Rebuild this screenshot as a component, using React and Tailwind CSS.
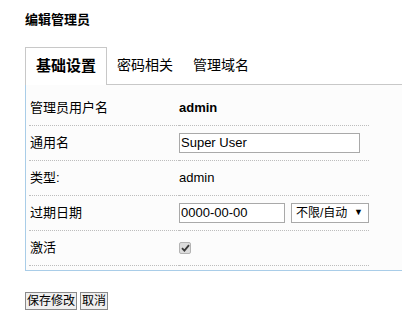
import React from 'react';

const rows = [
    { label: '管理员用户名', kind: 'bold', value: 'admin' },
    { label: '通用名', kind: 'input', value: 'Super User' },
    { label: '类型:', kind: 'text', value: 'admin' },
    { label: '过期日期', kind: 'date', value: '0000-00-00' },
    { label: '激活', kind: 'check' },
];

function Cell({ row }) {
    if (row.kind === 'bold') return <span className="font-bold">{row.value}</span>;
    if (row.kind === 'text') return <span>{row.value}</span>;
    if (row.kind === 'input') {
        return (
            <input
            defaultValue={row.value}
            className="w-[181px] h-[20px] border border-[#a9a9a9] bg-white px-[1px] text-[13px] outline-none"
            />
        );
    }
    if (row.kind === 'date') {
        return (
            <div className="flex items-center gap-[6px]">
                <input
                defaultValue={row.value}
                className="w-[106px] h-[20px] border border-[#a9a9a9] bg-white px-[1px] text-[13px] outline-none"
                />
                <div className="w-[78px] h-[20px] border border-[#a9a9a9] bg-white flex items-center justify-between pl-[4px] pr-[5px] text-[12px]">
                    <span>不限/自动</span>
                    <span className="text-[9px]">▼</span>
                </div>
            </div>
        );
    }
    // disabled checked checkbox
    return (
        <span className="w-[12px] h-[12px] rounded-[2px] border border-[#b4b4b4] bg-[#dcdcdc] flex items-center justify-center">
            <svg width="9" height="8" viewBox="0 0 9 8">
                <path d="M1 4.2 L3.4 6.6 L8 1.2" stroke="#3a3a3a" strokeWidth="1.8" fill="none" />
            </svg>
        </span>
    );
}

export default function App() {
    return (
    <div className="w-[402px] h-[311px] bg-white pl-[25px] text-[13px] text-black font-['Liberation_Sans','Noto_Sans_CJK_SC',sans-serif] overflow-hidden">
        <h2 className="h-[47px] pt-[12px] font-bold leading-[16px]">编辑管理员</h2>

        {/* tabs */}
        <div className="flex h-[38px]">
            <div className="w-[82px] border-t border-l border-r border-[#c8c8c8] bg-white flex items-center justify-center text-[15px] font-bold">
                基础设置
            </div>
            <div className="flex-1 flex items-center border-b border-[#c8c8c8] text-[14px]">
                <span className="px-[10px]">密码相关</span>
                <span className="px-[10px]">管理域名</span>
            </div>
        </div>

        {/* panel */}
        <div className="h-[186px] border-l border-b border-[#a9cde8] bg-[#fcfcfc] pl-[3px] pt-[5px]">
            <table className="w-[340px] border-collapse">
                <tbody>
                    {rows.map((row) => (
                    <tr key={row.label} className="h-[35px]">
                        <td className="w-[150px] pl-[1px] p-0 border-b border-dotted border-[#bdbdbd] align-middle">{row.label}</td>
                        <td className="p-0 border-b border-dotted border-[#bdbdbd] align-middle"><Cell row={row} /></td>
                    </tr>
                    ))}
                </tbody>
            </table>
        </div>

        <div className="mt-[21px] flex gap-[3px] text-[12px]">
            <button className="h-[18px] px-[1px] border border-[#8a8a8a] bg-[#efefef] leading-[16px]">保存修改</button>
            <button className="h-[18px] px-[1px] border border-[#8a8a8a] bg-[#efefef] leading-[16px]">取消</button>
        </div>
    </div>
    );
}
